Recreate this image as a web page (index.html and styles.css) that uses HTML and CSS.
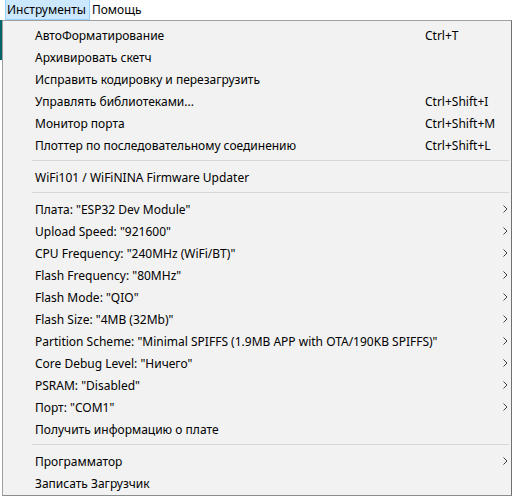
FILE: index.html
```html
<!DOCTYPE html>
<html lang="ru">
<head>
<meta charset="utf-8">
<link rel="stylesheet" href="styles.css">
</head>
<body>
<div class="menubar">
  <span class="mb-item active">Инструменты</span>
  <span class="mb-item">Помощь</span>
</div>
<div class="stage">
  <div class="popup">
    <div class="item"><span class="label">АвтоФорматирование</span><span class="key">Ctrl+T</span><span class="arrow"></span></div>
    <div class="item"><span class="label">Архивировать скетч</span><span class="key"></span><span class="arrow"></span></div>
    <div class="item"><span class="label">Исправить кодировку и перезагрузить</span><span class="key"></span><span class="arrow"></span></div>
    <div class="item"><span class="label">Управлять библиотеками...</span><span class="key">Ctrl+Shift+I</span><span class="arrow"></span></div>
    <div class="item"><span class="label">Монитор порта</span><span class="key">Ctrl+Shift+M</span><span class="arrow"></span></div>
    <div class="item"><span class="label">Плоттер по последовательному соединению</span><span class="key">Ctrl+Shift+L</span><span class="arrow"></span></div>
    <div class="sep"></div>
    <div class="item"><span class="label">WiFi101 / WiFiNINA Firmware Updater</span><span class="key"></span><span class="arrow"></span></div>
    <div class="sep"></div>
    <div class="item"><span class="label">Плата: "ESP32 Dev Module"</span><span class="key"></span><span class="arrow"><svg width="5" height="8" viewBox="0 0 5 8"><path d="M0.5 0.5 L4 4 L0.5 7.5" fill="none" stroke="#404040" stroke-width="1"/></svg></span></div>
    <div class="item"><span class="label">Upload Speed: "921600"</span><span class="key"></span><span class="arrow"><svg width="5" height="8" viewBox="0 0 5 8"><path d="M0.5 0.5 L4 4 L0.5 7.5" fill="none" stroke="#404040" stroke-width="1"/></svg></span></div>
    <div class="item"><span class="label">CPU Frequency: "240MHz (WiFi/BT)"</span><span class="key"></span><span class="arrow"><svg width="5" height="8" viewBox="0 0 5 8"><path d="M0.5 0.5 L4 4 L0.5 7.5" fill="none" stroke="#404040" stroke-width="1"/></svg></span></div>
    <div class="item"><span class="label">Flash Frequency: "80MHz"</span><span class="key"></span><span class="arrow"><svg width="5" height="8" viewBox="0 0 5 8"><path d="M0.5 0.5 L4 4 L0.5 7.5" fill="none" stroke="#404040" stroke-width="1"/></svg></span></div>
    <div class="item"><span class="label">Flash Mode: "QIO"</span><span class="key"></span><span class="arrow"><svg width="5" height="8" viewBox="0 0 5 8"><path d="M0.5 0.5 L4 4 L0.5 7.5" fill="none" stroke="#404040" stroke-width="1"/></svg></span></div>
    <div class="item"><span class="label">Flash Size: "4MB (32Mb)"</span><span class="key"></span><span class="arrow"><svg width="5" height="8" viewBox="0 0 5 8"><path d="M0.5 0.5 L4 4 L0.5 7.5" fill="none" stroke="#404040" stroke-width="1"/></svg></span></div>
    <div class="item"><span class="label">Partition Scheme: "Minimal SPIFFS (1.9MB APP with OTA/190KB SPIFFS)"</span><span class="key"></span><span class="arrow"><svg width="5" height="8" viewBox="0 0 5 8"><path d="M0.5 0.5 L4 4 L0.5 7.5" fill="none" stroke="#404040" stroke-width="1"/></svg></span></div>
    <div class="item"><span class="label">Core Debug Level: "Ничего"</span><span class="key"></span><span class="arrow"><svg width="5" height="8" viewBox="0 0 5 8"><path d="M0.5 0.5 L4 4 L0.5 7.5" fill="none" stroke="#404040" stroke-width="1"/></svg></span></div>
    <div class="item"><span class="label">PSRAM: "Disabled"</span><span class="key"></span><span class="arrow"><svg width="5" height="8" viewBox="0 0 5 8"><path d="M0.5 0.5 L4 4 L0.5 7.5" fill="none" stroke="#404040" stroke-width="1"/></svg></span></div>
    <div class="item"><span class="label">Порт: "COM1"</span><span class="key"></span><span class="arrow"><svg width="5" height="8" viewBox="0 0 5 8"><path d="M0.5 0.5 L4 4 L0.5 7.5" fill="none" stroke="#404040" stroke-width="1"/></svg></span></div>
    <div class="item"><span class="label">Получить информацию о плате</span><span class="key"></span><span class="arrow"></span></div>
    <div class="sep"></div>
    <div class="item"><span class="label">Программатор</span><span class="key"></span><span class="arrow"><svg width="5" height="8" viewBox="0 0 5 8"><path d="M0.5 0.5 L4 4 L0.5 7.5" fill="none" stroke="#404040" stroke-width="1"/></svg></span></div>
    <div class="item"><span class="label">Записать Загрузчик</span><span class="key"></span><span class="arrow"></span></div>
  </div>
</div>
</body>
</html>
```
FILE: styles.css
```css
html, body {
  margin: 0;
  padding: 0;
}
body {
  width: 512px;
  height: 496px;
  overflow: hidden;
  background: #ffffff;
  font-family: "Noto Sans", "Open Sans", sans-serif;
  font-size: 12px;
  color: #000000;
}
.menubar {
  height: 20px;
  display: flex;
  align-items: stretch;
  padding-left: 5px;
  background: #ffffff;
}
.mb-item {
  display: flex;
  align-items: center;
  padding: 0 3px 0 1px;
  border: 1px solid transparent;
  border-top: 0;
}
.mb-item.active {
  background: #cce8ff;
  border-color: #99d1ff;
}
.stage {
  background: linear-gradient(#006468, #006468) no-repeat 0 0 / 2px 40px;
}
.popup {
  margin-left: 2px;
  width: 510px;
  height: 476px;
  box-sizing: border-box;
  background: #f2f2f2;
  border: 1px solid #a0a0a0;
  border-right-color: #707070;
  border-bottom-color: #8c8c8c;
  padding: 3px 0 1px 0;
}
.item {
  height: 22px;
  display: grid;
  grid-template-columns: minmax(0, 1fr) 74px 12px;
  align-items: center;
  padding-left: 32px;
  white-space: nowrap;
}
.label {
  overflow: visible;
}
.key {
  text-align: left;
}
.arrow {
  display: flex;
  align-items: center;
  justify-content: center;
}
.arrow svg {
  display: block;
}
.sep {
  height: 1px;
  margin: 4px 2px 5px 29px;
  background: #d7d7d7;
}
```
